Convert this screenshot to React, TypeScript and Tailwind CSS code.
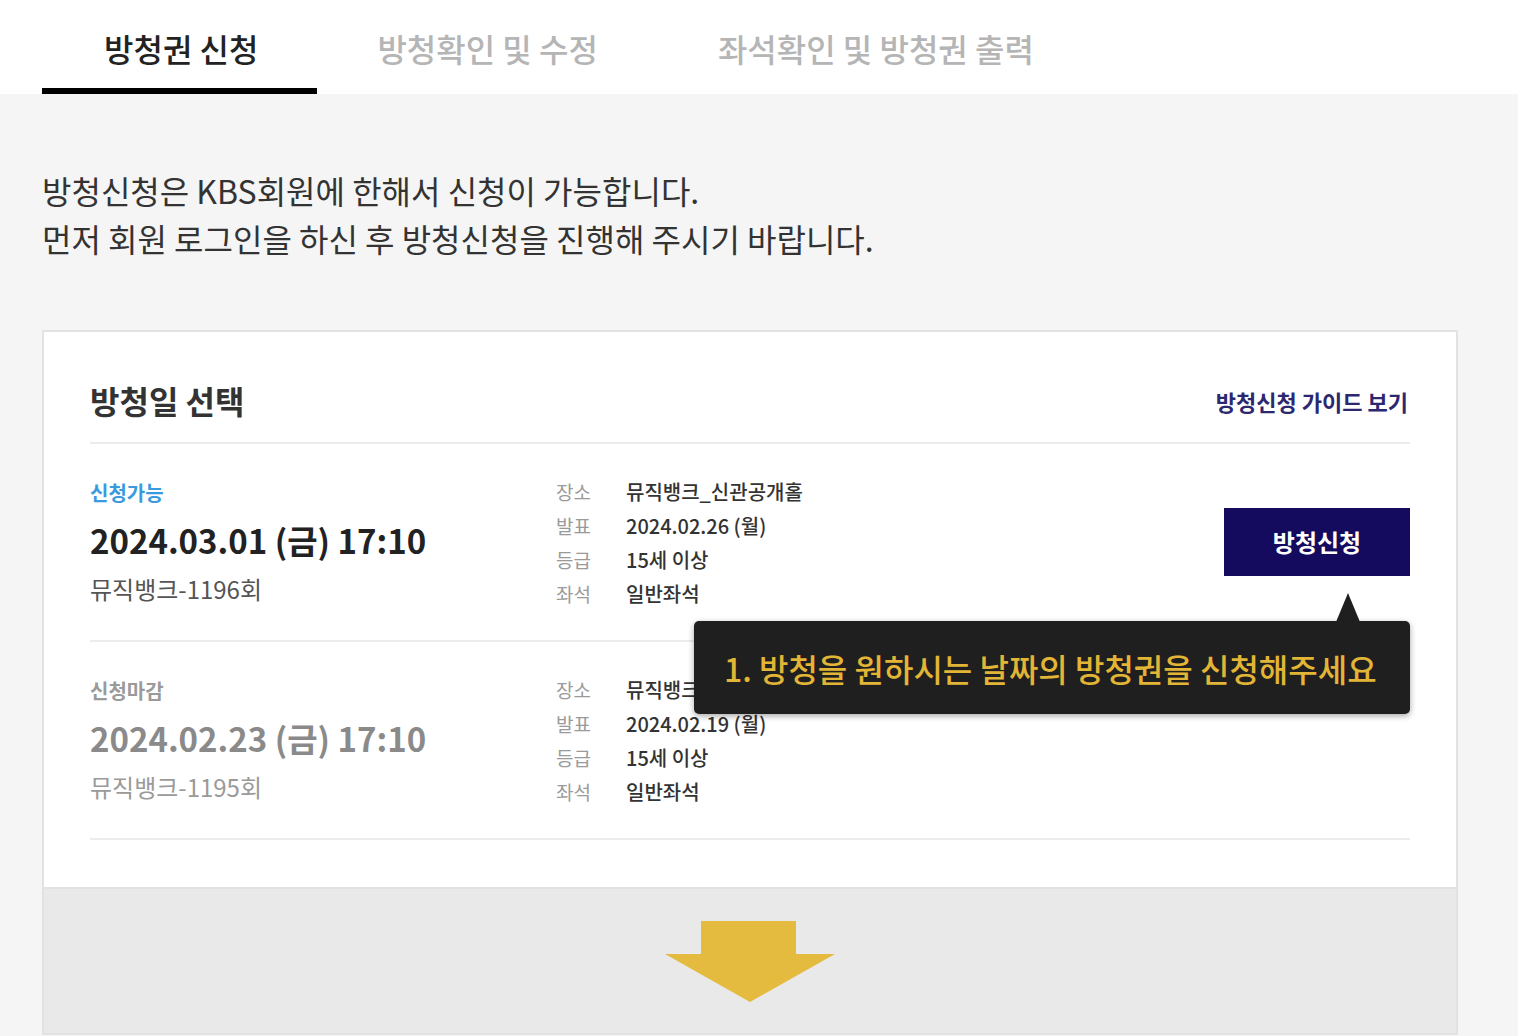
import React from "react";

const font = { fontFamily: '"Noto Sans CJK KR", "Noto Sans", sans-serif' };

interface Show {
  status: string;
  open: boolean;
  date: string;
  title: string;
  place: string;
  notice: string;
  grade: string;
  seat: string;
}

const shows: Show[] = [
  {
    status: "신청가능",
    open: true,
    date: "2024.03.01 (금) 17:10",
    title: "뮤직뱅크-1196회",
    place: "뮤직뱅크_신관공개홀",
    notice: "2024.02.26 (월)",
    grade: "15세 이상",
    seat: "일반좌석",
  },
  {
    status: "신청마감",
    open: false,
    date: "2024.02.23 (금) 17:10",
    title: "뮤직뱅크-1195회",
    place: "뮤직뱅크_신관공개홀",
    notice: "2024.02.19 (월)",
    grade: "15세 이상",
    seat: "일반좌석",
  },
];

function InfoList({ show }: { show: Show }) {
  const rows = [
    ["장소", show.place],
    ["발표", show.notice],
    ["등급", show.grade],
    ["좌석", show.seat],
  ];
  return (
    <div className="flex flex-col">
      {rows.map(([k, v]) => (
        <div key={k} className="flex h-[34px] items-center text-[20px]">
          <span className="w-[70px] text-[19px] text-[#9a9a9a]">{k}</span>
          <span className="font-medium text-[#333]">{v}</span>
        </div>
      ))}
    </div>
  );
}

function ShowRow({ show }: { show: Show }) {
  return (
    <div className="relative flex h-[198px] border-b-2 border-[#ececec] pt-[31px]">
      <div className="flex w-[466px] flex-col">
        <span className={`h-[36px] text-[20px] font-bold leading-[36px] ${show.open ? "text-[#3a9ae0]" : "text-[#9a9a9a]"}`}>
          {show.status}
        </span>
        <span className={`h-[58px] text-[33px] font-bold leading-[58px] ${show.open ? "text-[#222]" : "text-[#8a8a8a]"}`}>
          {show.date}
        </span>
        <span className={`h-[40px] text-[24px] leading-[40px] ${show.open ? "text-[#555]" : "text-[#9a9a9a]"}`}>
          {show.title}
        </span>
      </div>
      <InfoList show={show} />
      {show.open && (
        <div className="ml-auto mt-[33px]">
          <button className="h-[68px] w-[186px] bg-[#140a5e] text-[24px] font-bold text-white">방청신청</button>
        </div>
      )}
    </div>
  );
}

export default function App() {
  const tabs = ["방청권 신청", "방청확인 및 수정", "좌석확인 및 방청권 출력"];
  return (
    <div className="min-h-screen bg-[#f5f5f5]" style={font}>
      <div className="flex h-[94px] bg-white pl-[42px]">
        {tabs.map((t, i) => (
          <div
            key={t}
            className={`flex items-center text-[32px] font-medium ${
              i === 0
                ? "border-b-[6px] border-black pl-[62px] pr-[59px] pt-[8px] text-[#222]"
                : "px-[60px] pt-[2px] text-[#b5b5b5]"
            }`}
          >
            {t}
          </div>
        ))}
      </div>

      <div className="ml-[42px] w-[1416px]">
        <div className="pt-[72px] text-[32px] leading-[48px] text-[#333]">
          <p>방청신청은 KBS회원에 한해서 신청이 가능합니다.</p>
          <p>먼저 회원 로그인을 하신 후 방청신청을 진행해 주시기 바랍니다.</p>
        </div>

        <div className="mt-[68px] border-2 border-[#e2e2e2] bg-white px-[46px] pb-[47px]">
          <div className="flex h-[112px] items-end justify-between border-b-2 border-[#ececec] pb-[18px]">
            <h2 className="text-[32px] font-bold text-[#333]">방청일 선택</h2>
            <a className="pb-[6px] pr-[2px] text-[22px] font-bold text-[#2c2870]">방청신청 가이드 보기</a>
          </div>
          <div className="relative">
            {shows.map((s) => (
              <ShowRow key={s.date} show={s} />
            ))}
            <div className="absolute left-[604px] top-[177px] z-10 flex h-[93px] w-[716px] items-center rounded-[5px] bg-[#1f1f1f] pl-[30px] shadow-[0_2px_6px_rgba(0,0,0,0.35)]">
              <div className="absolute right-[50px] top-[-28px] h-0 w-0 border-x-[12px] border-b-[29px] border-x-transparent border-b-[#1f1f1f]" />
              <span className="text-[32px] font-medium text-[#e3b536]">1. 방청을 원하시는 날짜의 방청권을 신청해주세요</span>
            </div>
          </div>
        </div>

        <div className="flex h-[146px] justify-center border-x-2 border-b-2 border-[#e2e2e2] bg-[#e9e9e9] pt-[32px]">
          <svg width="172" height="82" viewBox="0 0 172 82">
            <path d="M37 0 H132 V33 H171 L86 81 L1 33 H37 Z" fill="#e4bb3e" />
          </svg>
        </div>
      </div>
    </div>
  );
}
